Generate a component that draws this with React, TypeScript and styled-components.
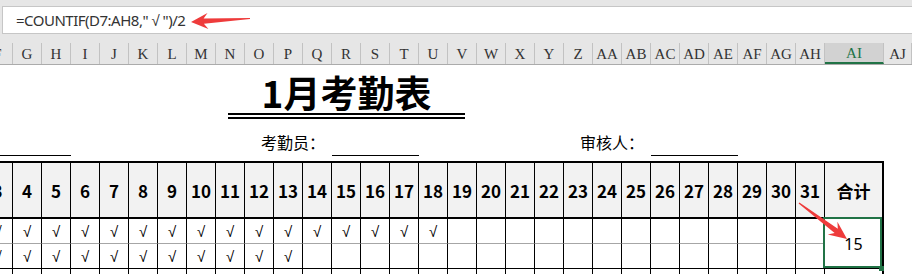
import styled, { createGlobalStyle, css } from 'styled-components';

const GRID = '13px repeat(28, 29px) 59px 1fr';
const LETTERS = [
  'F',
  ...'GHIJKLMNOPQRSTUVWXYZ'.split(''),
  'AA', 'AB', 'AC', 'AD', 'AE', 'AF', 'AG', 'AH', 'AI', 'AJ',
];
const DAYS = Array.from({ length: 29 }, (_, i) => i + 3);
const ROWS: { line: 'grey' | 'black'; has: (d: number) => boolean }[] = [
  { line: 'grey', has: (d) => d <= 18 },
  { line: 'black', has: (d) => d <= 13 },
  { line: 'black', has: (d) => d <= 8 || d === 13 },
];
const RED = '#ee3b3b';
const GREEN = '#217346';

const GlobalStyle = createGlobalStyle`
  html, body {
    margin: 0;
    padding: 0;
    background: #fff;
    overflow: hidden;
  }
`;

// tapered screenshot-style arrow, tail -> tip
const arrowPoints = (
  x1: number, y1: number, x2: number, y2: number,
  headLen: number, headHalf: number, neck: number, tail: number
) => {
  const len = Math.hypot(x2 - x1, y2 - y1);
  const ux = (x2 - x1) / len;
  const uy = (y2 - y1) / len;
  const nx = -uy;
  const ny = ux;
  const bx = x2 - ux * headLen * 0.75;
  const by = y2 - uy * headLen * 0.75;
  const hx = x2 - ux * headLen;
  const hy = y2 - uy * headLen;
  const pts = [
    [x1 + nx * tail, y1 + ny * tail],
    [bx + nx * neck, by + ny * neck],
    [hx + nx * headHalf, hy + ny * headHalf],
    [x2, y2],
    [hx - nx * headHalf, hy - ny * headHalf],
    [bx - nx * neck, by - ny * neck],
    [x1 - nx * tail, y1 - ny * tail],
  ];
  return pts.map((p) => p.map((v) => v.toFixed(1)).join(',')).join(' ');
};

export default function App() {
  return (
    <Page>
      <GlobalStyle />
      <TopBar>
        <FormulaBox>
          {'=COUNTIF(D7:AH8," '}
          <Radical>√</Radical>
          {' ")/2'}
        </FormulaBox>
        <ColHeaderRow>
          {LETTERS.map((l, i) => (
            <ColCell key={l} $first={i === 0} $active={l === 'AI'}>
              <Clip>{l}</Clip>
            </ColCell>
          ))}
        </ColHeaderRow>
      </TopBar>

      <Sheet>
        <TitleRow>
          <Title>1月考勤表</Title>
        </TitleRow>

        <SignRow>
          <SignBlank $col="1 / 4" />
          <SignLabel $col="9 / 13" $pad={7}>考勤员：</SignLabel>
          <SignBlank $col="13 / 16" />
          <SignLabel $col="19 / 24" $pad={7}>审核人：</SignLabel>
          <SignBlank $col="24 / 27" />
        </SignRow>

        <AttendTable>
          {DAYS.map((d, i) => (
            <HeadCell key={`h${d}`} $first={i === 0}>
              <Clip>{d}</Clip>
            </HeadCell>
          ))}
          <HeadCell $total>合计</HeadCell>
          <Blank />

          {ROWS.map((row, r) => [
            ...DAYS.map((d, i) => (
              <BodyCell key={`${r}-${d}`} $line={row.line} $first={i === 0}>
                <Clip>{row.has(d) ? '√' : ''}</Clip>
              </BodyCell>
            )),
            r === 0 ? (
              <TotalCell key={`${r}-total`} $line="black" $total>
                15
              </TotalCell>
            ) : r === 2 ? (
              <BodyCell key={`${r}-total`} $line="black" $total />
            ) : null,
            <Blank key={`${r}-aj`} />,
          ])}
        </AttendTable>
      </Sheet>

      <Overlay width="912" height="274" viewBox="0 0 912 274">
        <polygon fill={RED} points={arrowPoints(250, 18.5, 191, 22, 17, 8, 2.6, 0.6)} />
        <polygon fill={RED} points={arrowPoints(799, 203, 847, 239, 18, 8, 2.6, 0.6)} />
      </Overlay>
    </Page>
  );
}

const Page = styled.div`
  position: relative;
  width: 912px;
  height: 274px;
  overflow: hidden;
  background: #fff;
`;

const TopBar = styled.div`
  background: #e6e6e6;
  padding-top: 6px;
`;

const FormulaBox = styled.div`
  height: 28px;
  margin-left: 2px;
  box-sizing: border-box;
  border: 1px solid #c6c6c6;
  border-right: none;
  background: #fff;
  padding-left: 13px;
  display: flex;
  align-items: center;
  white-space: pre;
  font-family: 'Noto Sans', sans-serif;
  font-size: 15px;
  letter-spacing: -0.5px;
  color: #333;
`;

const Radical = styled.span`
  font-family: 'Liberation Sans', sans-serif;
`;

const ColHeaderRow = styled.div`
  margin-top: 9px;
  display: grid;
  grid-template-columns: ${GRID};
  height: 21px;
  border-bottom: 1px solid #ababab;
`;

const Clip = styled.span`
  flex: none;
  width: 29px;
  text-align: center;
`;

const ColCell = styled.div<{ $first?: boolean; $active?: boolean }>`
  display: flex;
  align-items: center;
  justify-content: ${(p) => (p.$first ? 'flex-end' : 'center')};
  overflow: hidden;
  box-sizing: border-box;
  padding-top: 2px;
  border-right: 1px solid #c2c2c2;
  font-family: 'Liberation Serif', serif;
  font-size: 15px;
  color: #333;

  ${(p) =>
    p.$active &&
    css`
      background: #d2d2d2;
      color: ${GREEN};
      border-bottom: 2px solid ${GREEN};
      border-right-color: #c2c2c2;
    `}
`;

const Sheet = styled.div`
  display: flex;
  flex-direction: column;
`;

const TitleRow = styled.div`
  display: flex;
  padding-left: 228px;
  padding-top: 7px;
`;

const Title = styled.div`
  width: 237px;
  text-align: center;
  font-family: 'Noto Sans CJK SC', sans-serif;
  font-weight: 700;
  font-size: 37px;
  line-height: 41px;
  color: #000;
  border-bottom: 6px double #000;
`;

const SignRow = styled.div`
  display: grid;
  grid-template-columns: ${GRID};
  height: 37px;
  align-items: end;
`;

const SignLabel = styled.div<{ $col: string; $pad: number }>`
  grid-column: ${(p) => p.$col};
  text-align: right;
  padding-right: ${(p) => p.$pad}px;
  margin-bottom: 3px;
  font-family: 'Noto Sans CJK SC', sans-serif;
  font-size: 16px;
  line-height: 22px;
  color: #000;
`;

const SignBlank = styled.div<{ $col: string }>`
  grid-column: ${(p) => p.$col};
  height: 22px;
  border-bottom: 1px solid #000;
`;

const AttendTable = styled.div`
  margin-top: 5px;
  display: grid;
  grid-template-columns: ${GRID};
  grid-template-rows: 58px 25px 25px 25px;
`;

const HeadCell = styled.div<{ $first?: boolean; $total?: boolean }>`
  display: flex;
  align-items: center;
  justify-content: ${(p) => (p.$first ? 'flex-end' : 'center')};
  overflow: hidden;
  box-sizing: border-box;
  background: #f2f2f2;
  border-top: 2px solid #000;
  border-bottom: 2px solid #000;
  border-right: ${(p) => (p.$total ? 2 : 1)}px solid #000;
  font-family: 'Noto Sans CJK SC', sans-serif;
  font-weight: 700;
  font-size: 17px;
  color: #000;
`;

const BodyCell = styled.div<{ $line: 'grey' | 'black'; $first?: boolean; $total?: boolean }>`
  display: flex;
  align-items: center;
  justify-content: ${(p) => (p.$first ? 'flex-end' : 'center')};
  overflow: hidden;
  box-sizing: border-box;
  border-right: ${(p) => (p.$total ? 2 : 1)}px solid #000;
  border-bottom: 1px solid ${(p) => (p.$line === 'grey' ? '#a6a6a6' : '#000')};
  font-family: 'Liberation Sans', sans-serif;
  font-size: 15px;
  color: #000;
`;

const TotalCell = styled(BodyCell)`
  grid-row: span 2;
  position: relative;
  overflow: visible;
  font-family: 'Noto Sans', sans-serif;
  font-size: 16px;

  &::after {
    content: '';
    position: absolute;
    top: -2px;
    left: -2px;
    right: 0;
    bottom: 0;
    border: 2px solid ${GREEN};
  }

  &::before {
    content: '';
    position: absolute;
    right: -2px;
    bottom: -3px;
    width: 5px;
    height: 5px;
    background: ${GREEN};
    z-index: 1;
  }
`;

const Blank = styled.div``;

const Overlay = styled.svg`
  position: absolute;
  top: 0;
  left: 0;
  pointer-events: none;
`;
